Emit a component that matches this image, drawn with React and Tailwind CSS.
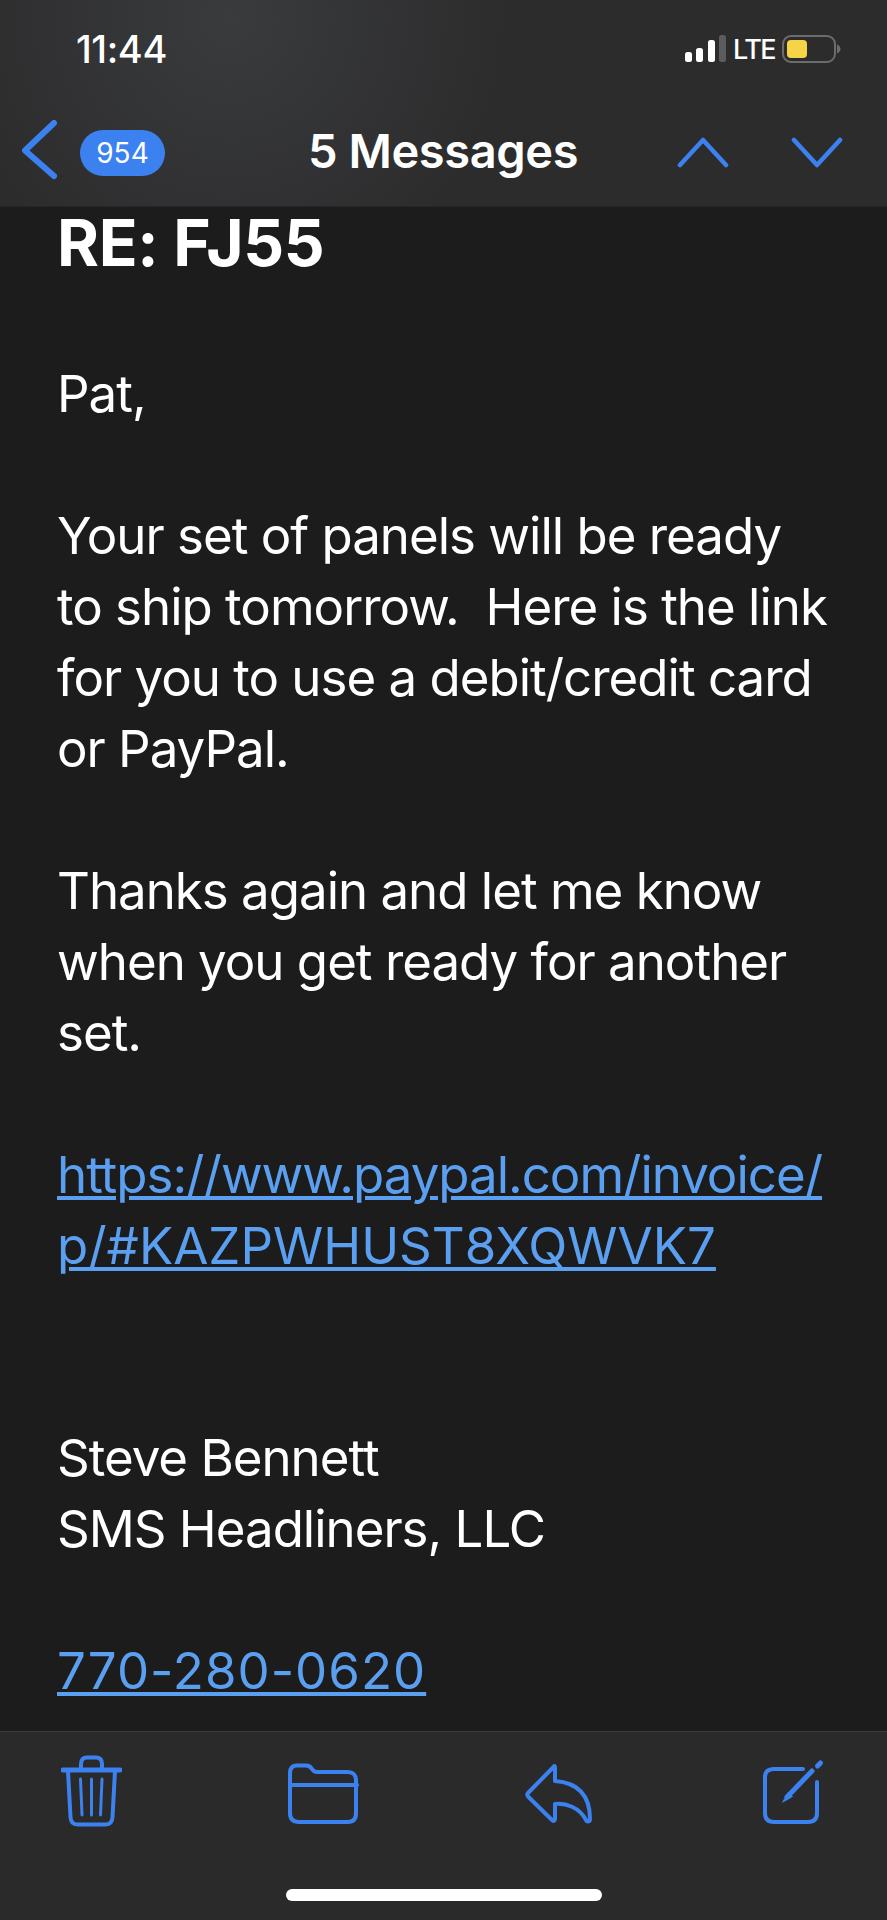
const BLUE = "#3b82f0";

function Chevron({ points, width, height, strokeWidth }) {
  return (
    <svg width={width} height={height} viewBox={`0 0 ${width} ${height}`} fill="none" stroke={BLUE} strokeWidth={strokeWidth} strokeLinecap="round" strokeLinejoin="round">
      <polyline points={points} />
    </svg>
  );
}

function SignalBattery() {
  return (
    <div className="flex items-center">
      <svg width="42" height="28" viewBox="0 0 42 28">
        <rect x="0" y="17" width="7" height="10" rx="2.5" fill="#fff" />
        <rect x="11" y="13" width="7" height="14" rx="2.5" fill="#fff" />
        <rect x="23" y="5" width="7" height="22" rx="2.5" fill="#fff" />
        <rect x="34" y="0" width="7" height="27" rx="2.5" fill="#5c5c5e" />
      </svg>
      <span className="ml-[6px] w-[43px] text-[27px] font-medium leading-none tracking-[-1.5px] text-white">LTE</span>
      <svg className="ml-[6px]" width="59" height="28" viewBox="0 0 59 28">
        <rect x="1" y="1" width="52" height="26" rx="8" fill="none" stroke="#6c6c6e" strokeWidth="2" />
        <rect x="5" y="5" width="20" height="18" rx="4" fill="#f5d547" />
        <path d="M55 9.5c2 .6 3.5 2.4 3.5 4.5s-1.500 3.900-3.500 4.500z" fill="#6c6c6e" />
      </svg>
    </div>
  );
}

function Trash() {
  return (
    <svg width="61" height="72" viewBox="0 0 61 72" fill="none" stroke={BLUE} strokeWidth="4" strokeLinecap="round" strokeLinejoin="round">
      <path d="M2 15h57" strokeWidth="5" />
      <path d="M20 14V9c0-4 2-6.500 6-6.500h9c4 0 6 2.500 6 6.500v5" />
      <path d="M7 16l2.500 46c.2 5 2.500 7.500 7 7.500h28c4.500 0 6.800-2.500 7-7.500L54 16" />
      <path d="M19.500 24l1.500 36M30.500 24v36M41 24l-1.500 36" strokeWidth="3" />
    </svg>
  );
}

function Folder() {
  return (
    <svg width="71" height="72" viewBox="0 0 71 72" fill="none" stroke={BLUE} strokeWidth="4" strokeLinecap="round" strokeLinejoin="round">
      <path d="M2 18c0-5 2.500-7.500 7-7.500h9c3 0 4.500 1 6 3.500 1.200 2 2.800 3 5 3h31c5 0 8 3 8 8v33c0 6-3 9-8 9H11c-6 0-9-3-9-9z" />
      <path d="M2 30h67" />
    </svg>
  );
}

function Reply() {
  return (
    <svg width="68" height="72" viewBox="0 0 68 72" fill="none" stroke={BLUE} strokeWidth="4" strokeLinecap="round" strokeLinejoin="round">
      <path d="M29 11.500L3 38c-1 1-1 2 0 3.500L27 65c1.500 1.500 3 1 3-1V49c11-1 24 3 31 16 1 2 4 2 4-1 0-21-9-36-35-38V13c0-2-.5-2.500-1-1.500z" />
    </svg>
  );
}

function Compose() {
  return (
    <svg width="66" height="72" viewBox="0 0 66 72" fill="none" stroke={BLUE} strokeWidth="4" strokeLinecap="round" strokeLinejoin="round">
      <path d="M40 14H11c-6 0-9 3-9 8v36c0 6 3 9 9 9h34c6 0 9-3 9-9V27" />
      <path d="M49 16L24 42" strokeWidth="5" />
      <path d="M25.500 37.500l4 4L20 47z" fill={BLUE} strokeWidth="1" />
      <path d="M54.500 11l3-3" strokeWidth="5" />
    </svg>
  );
}

export default function App() {
  return (
    <div className="flex h-[1920px] w-[887px] flex-col overflow-hidden bg-[#1c1c1d] font-['Inter',sans-serif] text-white">
      <header className="relative z-10 h-[207px] shrink-0 border-b border-[#262628] bg-[#2c2c2d] bg-[radial-gradient(circle_at_230px_20px,#3a3b3d_0%,#2c2c2d_280px)]">
        <div className="flex h-[96px] items-center justify-between pl-[76px] pr-[46px] pt-[2px]">
          <span className="text-[38px] font-medium tracking-[-0.4px]">11:44</span>
          <SignalBattery />
        </div>
        <nav className="relative flex h-[110px] items-start">
          <div className="ml-[22px] mt-[24px]">
            <Chevron points="32,3 3,30.500 32,56" width="36" height="60" strokeWidth="6" />
          </div>
          <span className="ml-[22px] mt-[34px] flex h-[46px] w-[85px] items-center justify-center rounded-[23px] bg-[#3b82f0] text-[28px] leading-none">954</span>
          <h1 className="absolute left-0 right-0 top-[27px] ml-[-1px] text-center text-[47px] font-semibold leading-[56px] tracking-[-0.4px]">5 Messages</h1>
          <div className="ml-auto mt-[41px] flex gap-[62px] pr-[44px]">
            <Chevron points="3,28 26,3 49,28" width="52" height="31" strokeWidth="4.500" />
            <Chevron points="3,3 26,28 49,3" width="52" height="31" strokeWidth="4.500" />
          </div>
        </nav>
      </header>

      <main className="flex-1 whitespace-nowrap pl-[57px] text-[51px] leading-[71px] tracking-[-1px]">
        <h2 className="text-[64px] font-bold leading-[72px] tracking-[-0.3px]">RE: FJ55</h2>
        <p className="mt-[79px]">Pat,</p>
        <p className="mt-[71px]">Your set of panels will be ready<br />to ship tomorrow.&nbsp; Here is the link<br />for you to use a debit/credit card<br />or PayPal.</p>
        <p className="mt-[71px]">Thanks again and let me know<br />when you get ready for another<br />set.</p>
        <a className="mt-[71px] block text-[#5b9ff0] underline decoration-[4px] underline-offset-[3px]" href="#invoice">https://www.paypal.com/invoice/<br /><span className="tracking-normal">p/#KAZPWHUST8XQWVK7</span></a>
        <p className="mt-[141px]">Steve Bennett<br />SMS Headliners, LLC</p>
        <a className="mt-[71px] block tracking-[1px] text-[#5b9ff0] underline decoration-[4px] underline-offset-[3px]" href="#phone">770-280-0620</a>
      </main>

      <footer className="h-[189px] shrink-0 border-t border-[#3a3a3c] bg-[#2a2a2b]">
        <div className="flex pl-[61px] pt-[23px]">
          <Trash />
          <div className="ml-[166px]"><Folder /></div>
          <div className="ml-[166px]"><Reply /></div>
          <div className="ml-[170px]"><Compose /></div>
        </div>
        <div className="ml-[286px] mt-[62px] h-[12px] w-[316px] rounded-full bg-white" />
      </footer>
    </div>
  );
}
